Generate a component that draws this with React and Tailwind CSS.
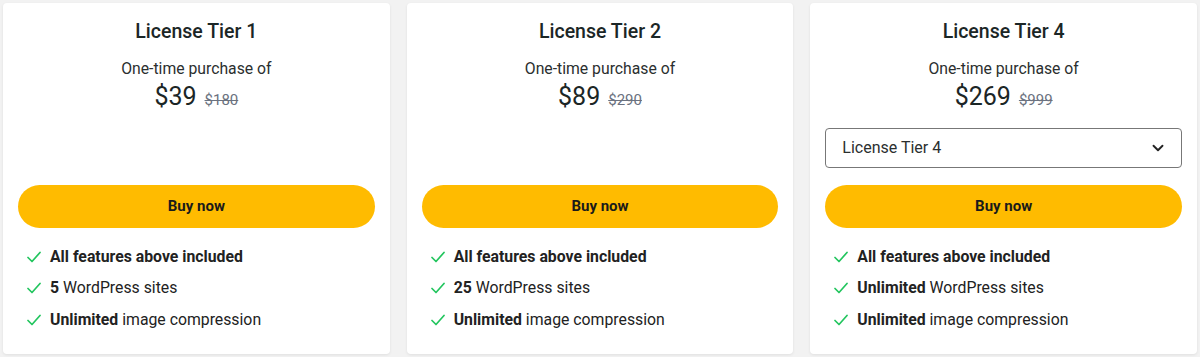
import React from 'react';
import { ChevronDown } from 'lucide-react';

const tiers = [
    { name: 'License Tier 1', price: '$39', old: '$180', sites: '5', select: false },
    { name: 'License Tier 2', price: '$89', old: '$290', sites: '25', select: false },
    { name: 'License Tier 4', price: '$269', old: '$999', sites: 'Unlimited', select: true },
];

const Check = () => (
    <svg width="14" height="12" viewBox="0 0 14 12" fill="none" className="shrink-0">
        <path d="M1 6.5L5 10.5L13 1.5" stroke="#22c55e" strokeWidth="1.7" strokeLinecap="round" strokeLinejoin="round" />
    </svg>
);

const Feature = ({ children }) => (
    <li className="flex items-center h-[31.5px] pl-[9px] gap-[9px] text-[15.8px] text-[#222]">
        <Check />
        <span>{children}</span>
    </li>
);

const Card = ({ tier }) => {
    return (
        <div className="bg-white rounded-[4px] shadow-[0_1px_3px_rgba(0,0,0,0.08)] px-[15px] pt-[15px] pb-[18px]">
            <h3 className="text-center text-[19.5px] leading-[28px] font-medium text-[#1b2626]">{tier.name}</h3>
            <p className="mt-[11px] text-center text-[15.75px] leading-[24px] text-[#2b2f2f]">One-time purchase of</p>
            <div className="flex items-baseline justify-center gap-[8px] leading-[32px]">
                <span className="text-[25px] font-normal text-[#1b2626]">{tier.price}</span>
                <span className="text-[15px] text-[#6b7280] line-through">{tier.old}</span>
            </div>

            {/* Tier select, only on the last card */}
            <div className="mt-[12px] h-[40px]">
                {tier.select && (
                    <div className="h-full flex items-center justify-between border border-[#777] rounded-[4px] pl-[16px] pr-[14px] text-[16px] text-[#2b2f2f]">
                        <span>{tier.name}</span>
                        <ChevronDown size={18} strokeWidth={2.5} className="text-[#222]" />
                    </div>
                )}
            </div>

            <button className="mt-[17px] w-full h-[43px] rounded-full bg-[#ffbb00] text-[15px] font-bold text-[#1a1a1a]">
                Buy now
            </button>

            <ul className="mt-[13px]">
                <Feature><b className="font-bold">All features above included</b></Feature>
                <Feature><b className="font-bold">{tier.sites}</b> WordPress sites</Feature>
                <Feature><b className="font-bold">Unlimited</b> image compression</Feature>
            </ul>
        </div>
    );
};

export default function App() {
    return (
        <div className="w-[1200px] h-[357px] bg-[#f2f2f2] p-[3px] font-['Roboto',sans-serif]">
            <div className="grid grid-cols-3 gap-[17px]">
                {tiers.map((t) => (
                    <Card key={t.name} tier={t} />
                ))}
            </div>
        </div>
    );
}
